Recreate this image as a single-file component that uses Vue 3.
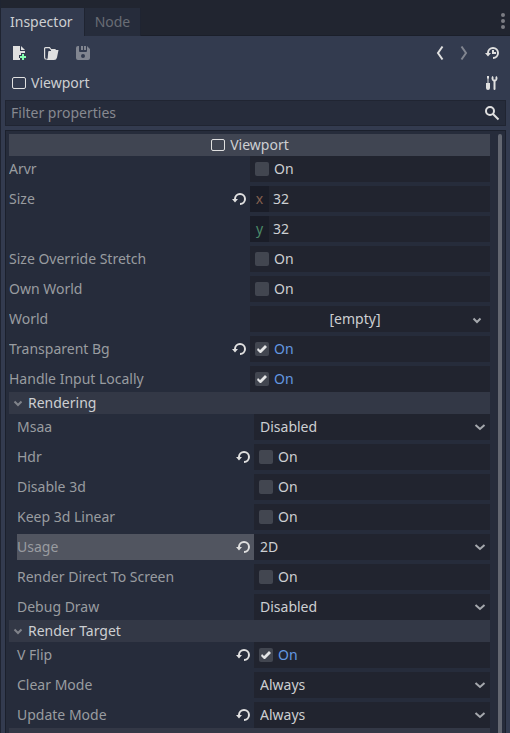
<script setup>
import { ref } from 'vue'

const tab = ref('Inspector')
const filter = ref('')

const groups = ref([
  {
    title: '',
    rows: [
      { name: 'Arvr', kind: 'bool', value: false },
      { name: 'Size', kind: 'vector', value: [{ axis: 'x', n: '32' }, { axis: 'y', n: '32' }], changed: true },
      { name: 'Size Override Stretch', kind: 'bool', value: false },
      { name: 'Own World', kind: 'bool', value: false },
      { name: 'World', kind: 'resource', value: '[empty]' },
      { name: 'Transparent Bg', kind: 'bool', value: true, changed: true },
      { name: 'Handle Input Locally', kind: 'bool', value: true },
    ],
  },
  {
    title: 'Rendering',
    rows: [
      { name: 'Msaa', kind: 'enum', value: 'Disabled', options: ['Disabled', '2x', '4x', '8x', '16x'] },
      { name: 'Hdr', kind: 'bool', value: false, changed: true },
      { name: 'Disable 3d', kind: 'bool', value: false },
      { name: 'Keep 3d Linear', kind: 'bool', value: false },
      { name: 'Usage', kind: 'enum', value: '2D', options: ['2D', '3D'], changed: true, selected: true },
      { name: 'Render Direct To Screen', kind: 'bool', value: false },
      { name: 'Debug Draw', kind: 'enum', value: 'Disabled', options: ['Disabled', 'Unshaded', 'Overdraw', 'Wireframe'] },
    ],
  },
  {
    title: 'Render Target',
    rows: [
      { name: 'V Flip', kind: 'bool', value: true, changed: true },
      { name: 'Clear Mode', kind: 'enum', value: 'Always', options: ['Always', 'Never'] },
      { name: 'Update Mode', kind: 'enum', value: 'Always', options: ['Always', 'Disabled', 'Once'], changed: true },
    ],
  },
])

const idOf = (row) => 'prop-' + row.name.toLowerCase().replace(/ /g, '-')
</script>

<template>
  <div class="dock">
    <nav class="tabs">
      <button class="tab" :class="{ active: tab === 'Inspector' }" @click="tab = 'Inspector'">Inspector</button>
      <button class="tab" :class="{ active: tab === 'Node' }" @click="tab = 'Node'">Node</button>
      <button class="menu" aria-label="Dock menu">
        <svg width="6" height="16" viewBox="0 0 6 16"><circle cx="3" cy="2" r="2" /><circle cx="3" cy="8" r="2" /><circle cx="3" cy="14" r="2" /></svg>
      </button>
    </nav>

    <main class="content">
      <div class="bar">
        <button class="tool" aria-label="New resource">
          <svg class="icon" viewBox="0 0 16 16"><path d="M2 1v14h7v-2H8v-3h2V8h4V6H9V1zm8 0v4h4z" /><path class="plus" d="M11 9h2v2h2v2h-2v2h-2v-2H9v-2h2z" /></svg>
        </button>
        <button class="tool" aria-label="Open resource">
          <svg class="icon" viewBox="0 0 16 16"><path class="line" d="M3.5 14.2C2.200 14.200 1.600 13.600 1.600 12.400V3.500Q1.600 2.600 2.500 2.600H6.500L8 4.500H12Q12.500 4.500 12.500 5.500" /><path d="M6 6h2V5h7.500L14 12.500Q13.500 15 11 15H3q1.500-.3 1.700-2L5.200 7Q5.300 6 6 6z" /></svg>
        </button>
        <button class="tool dim" aria-label="Save resource">
          <svg class="icon" viewBox="0 0 16 16"><path fill-rule="evenodd" d="M3 1H4v5q0 1 1 1h6q1 0 1-1V1l3 3v9q0 2-2 2H3q-2 0-2-2V3q0-2 2-2zM8 9a2 2 0 1 0 0 4 2 2 0 0 0 0-4zM6 1h2v4H6zM9 1h2v4H9z" /></svg>
        </button>
        <span class="spring"></span>
        <button class="tool slim" aria-label="Previous">
          <svg class="icon" viewBox="0 0 16 16"><path class="arrow" d="M10.500 1.500L6 8l4.500 6.500" /></svg>
        </button>
        <button class="tool slim dim" aria-label="Next">
          <svg class="icon" viewBox="0 0 16 16"><path class="arrow" d="M5.500 1.500L10 8l-4.500 6.500" /></svg>
        </button>
        <button class="tool" aria-label="History">
          <svg class="icon" viewBox="0 0 16 16"><path d="M9 2a6 6 0 0 0-6 6H1l3 3.500L7 8H5a4 4 0 1 1 4 4v2A6 6 0 1 0 9 2z" /><path d="M8 5h2v2h2v2H8z" /></svg>
        </button>
      </div>

      <div class="bar object">
        <svg class="icon" viewBox="0 0 16 16"><rect class="frame" x="1.500" y="2.500" width="13" height="11" rx="1.500" /></svg>
        <span>Viewport</span>
        <span class="spring"></span>
        <button class="tool" aria-label="Object tools">
          <svg class="icon" viewBox="0 0 16 16"><path d="M3 1h2v2l-.5 1v4H6v5q0 2-2 2t-2-2V8h1.500V4L3 3zM8 1.500q0-.5.5-.5L9.500 2v2.500h2V2l1-1q1 .5 1 2.500 0 2-2 3V14q0 1-1 1t-1-1V6.500q-2-1-2-3 0-1 .5-2z" /></svg>
        </button>
      </div>

      <label class="filter">
        <input v-model="filter" type="text" placeholder="Filter properties" aria-label="Filter properties" />
        <svg class="icon" viewBox="0 0 16 16"><circle class="lens" cx="6" cy="6" r="4" /><path class="lens" d="M9 9l5.500 5.500" /></svg>
      </label>

      <section class="panel">
        <div class="list">
          <h2 class="category">
            <svg class="icon" viewBox="0 0 16 16"><rect class="frame" x="1.500" y="2.500" width="13" height="11" rx="1.500" /></svg>
            Viewport
          </h2>

          <template v-for="group in groups" :key="group.title">
            <button v-if="group.title" class="section">
              <svg class="fold" viewBox="0 0 10 10"><path d="M1.500 3.500L5 7l3.500-3.500" /></svg>
              {{ group.title }}
            </button>
            <div class="rows" :class="{ nested: group.title }">
              <div v-for="row in group.rows" :key="row.name" class="row">
                <div class="name" :class="{ selected: row.selected }">
                  <label :for="idOf(row)">{{ row.name }}</label>
                  <button v-if="row.changed" class="revert" :aria-label="'Revert ' + row.name">
                    <svg class="icon" viewBox="0 0 16 16"><path d="M9 2a6 6 0 0 0-6 6H1l3 3.500L7 8H5a4 4 0 1 1 4 4v2A6 6 0 1 0 9 2z" /></svg>
                  </button>
                </div>

                <label v-if="row.kind === 'bool'" class="value check" :class="{ on: row.value }">
                  <input :id="idOf(row)" v-model="row.value" type="checkbox" />
                  On
                </label>

                <div v-else-if="row.kind === 'vector'" class="vector">
                  <label v-for="(part, i) in row.value" :key="part.axis" class="value component">
                    <span class="axis" :class="part.axis">{{ part.axis }}</span>
                    <input :id="i ? undefined : idOf(row)" v-model="part.n" type="text" />
                  </label>
                </div>

                <div v-else-if="row.kind === 'enum'" class="value choice">
                  <select :id="idOf(row)" v-model="row.value">
                    <option v-for="o in row.options" :key="o">{{ o }}</option>
                  </select>
                  <svg class="chevron" viewBox="0 0 12 12"><path d="M1.500 4L6 8l4.500-4" /></svg>
                </div>

                <button v-else :id="idOf(row)" class="value resource">
                  <span>{{ row.value }}</span>
                  <svg class="fold" viewBox="0 0 10 10"><path d="M1.500 4.500L5 8l3.500-3.500" /></svg>
                </button>
              </div>
            </div>
          </template>
          <div class="section"></div>
        </div>
        <div class="scroll"></div>
      </section>
    </main>
  </div>
</template>

<style>
body {
  background: #333b4f;
}
</style>

<style scoped>
.dock {
  display: flex;
  flex-direction: column;
  height: 100vh;
  box-sizing: border-box;
  overflow: hidden;
  border-left: 1px solid #1f2431;
  background: #333b4f;
  color: #cdcfd2;
  font: 14px/26px "Noto Sans", sans-serif;
}
button, input, select {
  margin: 0;
  padding: 0;
  border: 0;
  border-radius: 0;
  background: none;
  color: inherit;
  font: inherit;
  outline: none;
}
input, select { min-width: 0; }
.icon { width: 16px; height: 16px; flex: none; display: block; fill: #e0e0e0; }
.plus { fill: #84ffb1; }
.line, .arrow, .lens, .frame { fill: none; stroke: #e0e0e0; }
.line { stroke-width: 1.2; }
.arrow, .lens { stroke-width: 2; }
.spring { flex: 1; }

.tabs {
  display: flex;
  flex: none;
  height: 36px;
  box-sizing: border-box;
  padding-top: 8px;
  background: linear-gradient(#1b1f2a, #1b1f2a) bottom / 100% 1px no-repeat #212530;
}
.tab {
  padding: 0 10px;
  border-right: 1px solid #1f2431;
  background: #262c3b;
  color: #696d75;
}
.tab.active {
  padding: 0 11px 0 9px;
  background: #333b4f;
  color: #cdcfd2;
}
.menu { margin-left: auto; padding: 0 4px 2px; }
.menu svg { display: block; fill: #7b7d83; }

.content {
  display: flex;
  flex: 1;
  flex-direction: column;
  gap: 4px;
  min-height: 0;
  padding: 4px 4px 0;
}
.bar { display: flex; flex: none; gap: 4px; height: 26px; align-items: center; }
.object { padding-left: 6px; }
.tool { padding: 0 6px; }
.slim { padding: 0 2px; }
.dim { opacity: 0.45; }

.filter {
  display: flex;
  flex: none;
  align-items: center;
  height: 26px;
  box-sizing: border-box;
  padding: 0 5px;
  border: 1px solid #202532;
  background: #262c3b;
}
.filter input { flex: 1; line-height: 24px; }
.filter input::placeholder { color: #868990; opacity: 1; }

.panel {
  display: flex;
  flex: 1;
  gap: 8px;
  min-height: 0;
  padding: 3px 3px 0;
  border: 1px solid #1b202c;
  border-bottom: 0;
  background: #262c3b;
}
.list { flex: 1; min-width: 0; overflow: hidden; }
.scroll { flex: none; width: 4px; border-radius: 2px 2px 0 0; background: #636771; }

.category {
  display: flex;
  align-items: center;
  justify-content: center;
  gap: 4px;
  margin: 0;
  height: 22px;
  background: #404552;
  font: inherit;
}
.section {
  display: flex;
  align-items: center;
  gap: 5px;
  width: 100%;
  height: 22px;
  padding-left: 4px;
  box-sizing: border-box;
  background: #333846;
}
.fold, .chevron { flex: none; fill: none; stroke: #a5a8ad; stroke-width: 2; }
.fold { width: 10px; height: 10px; }
.section .fold { stroke: #80838a; }
.chevron { width: 12px; height: 12px; }

.rows { display: grid; gap: 4px; }
.nested { padding-left: 8px; }
.row { display: grid; grid-template-columns: 1fr 1fr; column-gap: 1px; }
.name {
  display: flex;
  justify-content: space-between;
  align-items: flex-start;
  margin-right: -1px;
  color: #999ca0;
  white-space: nowrap;
}
.selected { background: #515560; }
.revert { height: 26px; padding-right: 3px; }

.value { height: 26px; background: #21242f; }
.check { display: flex; align-items: center; gap: 5px; padding-left: 5px; }
.check.on { color: #6397e0; }
.check input {
  appearance: none;
  width: 14px;
  height: 14px;
  border-radius: 2px;
  background: #424650;
}
.check input:checked::before {
  content: "";
  display: block;
  height: 14px;
  background: #e4e5e6;
  clip-path: polygon(2px 8px, 3px 6px, 5px 8px, 10px 3px, 12px 5px, 6px 11px, 5px 11px);
}
.vector { display: grid; gap: 4px; }
.component { display: flex; gap: 4px; }
.component input { flex: 1; }
.axis { width: 19px; background: #1a1d28; text-align: center; }
.x { color: #85604f; }
.y { color: #4c8a68; }
.choice { display: grid; grid-template-columns: 1fr 16px; align-items: center; }
.choice select {
  grid-area: 1 / 1 / 2 / 3;
  height: 26px;
  padding-left: 6px;
  appearance: none;
}
.choice option { background: #21242f; }
.chevron { grid-area: 1 / 2; pointer-events: none; }
.resource { display: flex; align-items: center; padding-right: 8px; }
.resource span { flex: 1; }
.resource .fold { margin-left: 12px; }
</style>
